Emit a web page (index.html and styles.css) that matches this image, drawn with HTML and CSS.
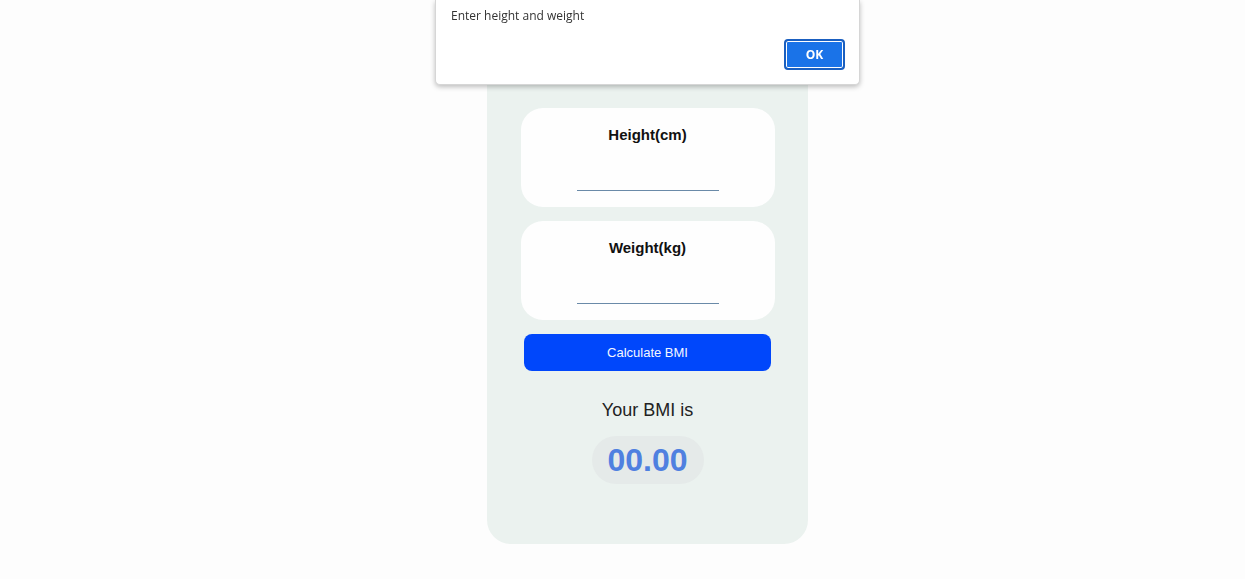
FILE: index.html
```html
<!DOCTYPE html>
<html lang="en">
<head>
<meta charset="utf-8">
<title>BMI Calculator</title>
<link rel="stylesheet" href="styles.css">
</head>
<body>
<main class="card">
  <h1 class="title">BMI Calculator</h1>
  <div class="field">
    <label class="field-label" for="h">Height(cm)</label>
    <input class="field-input" id="h" type="text">
  </div>
  <div class="field">
    <label class="field-label" for="w">Weight(kg)</label>
    <input class="field-input" id="w" type="text">
  </div>
  <button class="calc">Calculate BMI</button>
  <p class="result-label">Your BMI is</p>
  <div class="result">00.00</div>
</main>
<div class="alert">
  <p class="alert-text">Enter height and weight</p>
  <div class="alert-actions"><button class="alert-ok">OK</button></div>
</div>
</body>
</html>
```
FILE: styles.css
```css
html, body {
  margin: 0;
  padding: 0;
  background: #fdfdfd;
  font-family: "Liberation Sans", Arial, sans-serif;
}
.card {
  margin: 20px 0 0 487px;
  width: 321px;
  box-sizing: border-box;
  background: #ebf2ef;
  border-radius: 24px;
  padding: 0 34px 60px;
  display: flex;
  flex-direction: column;
  align-items: center;
}
.title {
  margin: 0;
  height: 88px;
  line-height: 60px;
  font-size: 24px;
  color: #222;
}
.field {
  width: 254px;
  box-sizing: border-box;
  background: #fefefe;
  border-radius: 22px;
  padding: 17px 0 16px;
  display: flex;
  flex-direction: column;
  align-items: center;
  margin-bottom: 14px;
}
.field-label {
  font-size: 15px;
  line-height: 20px;
  font-weight: bold;
  color: #111;
}
.field-input {
  margin-top: 22px;
  width: 142px;
  height: 24px;
  box-sizing: border-box;
  border: 0;
  border-bottom: 1px solid #6a8aa8;
  background: transparent;
  outline: none;
  padding: 0;
}
.calc {
  width: 247px;
  height: 37px;
  border: 0;
  border-radius: 8px;
  background: #0047fb;
  color: #f4f7ff;
  font-family: "Liberation Sans", Arial, sans-serif;
  font-size: 13px;
}
.result-label {
  margin: 28px 0 0;
  font-size: 18px;
  line-height: 22px;
  color: #222;
}
.result {
  margin-top: 15px;
  width: 112px;
  height: 48px;
  border-radius: 24px;
  background: #e5eae9;
  color: #4f80e0;
  font-size: 32px;
  font-weight: bold;
  line-height: 48px;
  text-align: center;
}
.alert {
  position: fixed;
  top: 0;
  left: 435px;
  width: 425px;
  height: 85px;
  box-sizing: border-box;
  background: #ffffff;
  border: 1px solid #d6d6d6;
  border-top: 0;
  border-radius: 0 0 5px 5px;
  box-shadow: 0 2px 5px rgba(0,0,0,0.25);
  padding: 8px 15px 0;
  font-family: "Open Sans", "Noto Sans", sans-serif;
}
.alert-text {
  margin: 0;
  font-size: 12px;
  line-height: 16px;
  color: #333;
}
.alert-actions {
  display: flex;
  justify-content: flex-end;
  margin-top: 15px;
}
.alert-ok {
  width: 61px;
  height: 31px;
  box-sizing: border-box;
  border: 2px solid #1a5fc0;
  box-shadow: inset 0 0 0 1px #ffffff;
  border-radius: 4px;
  background: #1a73e8;
  color: #fff;
  font-family: "Open Sans", "Noto Sans", sans-serif;
  font-weight: bold;
  font-size: 12px;
  margin-right: -1px;
}
```
